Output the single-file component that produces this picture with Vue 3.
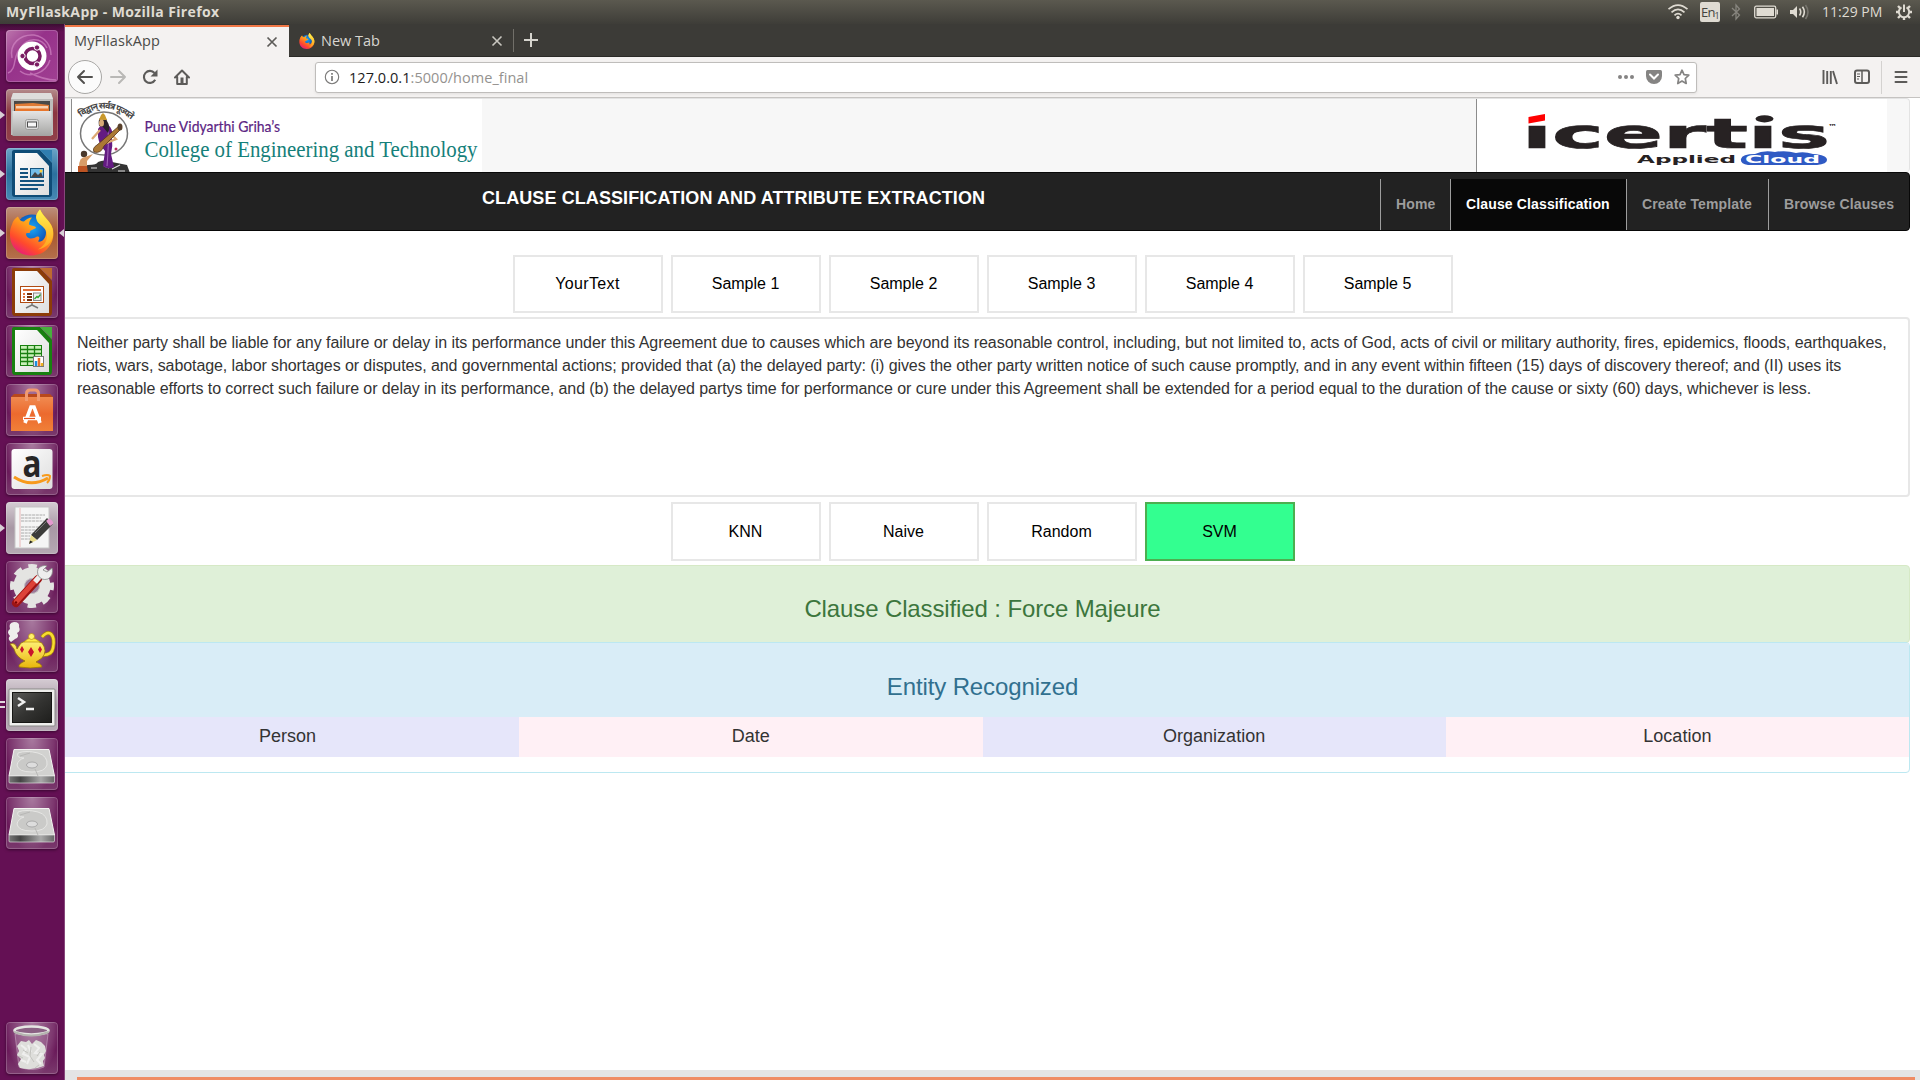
<script setup>
const samples = ['YourText', 'Sample 1', 'Sample 2', 'Sample 3', 'Sample 4', 'Sample 5']
const models = ['KNN', 'Naive', 'Random', 'SVM']
const entities = ['Person', 'Date', 'Organization', 'Location']
const nav = ['Home', 'Clause Classification', 'Create Template', 'Browse Clauses']
const clause = [
  'Neither party shall be liable for any failure or delay in its performance under this Agreement due to causes which are beyond its reasonable control, including, but not limited to, acts of God, acts of civil or military authority, fires, epidemics, floods, earthquakes,',
  'riots, wars, sabotage, labor shortages or disputes, and governmental actions; provided that (a) the delayed party: (i) gives the other party written notice of such cause promptly, and in any event within fifteen (15) days of discovery thereof; and (II) uses its',
  'reasonable efforts to correct such failure or delay in its performance, and (b) the delayed partys time for performance or cure under this Agreement shall be extended for a period equal to the duration of the cause or sixty (60) days, whichever is less.'
]
</script>

<template>
  <div class="desktop">
    <svg class="defs" width="0" height="0">
      <defs>
        <linearGradient id="foxBody" x1="0.8" y1="0" x2="0.2" y2="1">
          <stop offset="0" stop-color="#ffe226" /><stop offset=".45" stop-color="#ff9a1c" /><stop offset=".75" stop-color="#ff4a2c" /><stop offset="1" stop-color="#e31587" />
        </linearGradient>
        <linearGradient id="foxTail" x1="0" y1="0" x2="0" y2="1">
          <stop offset="0" stop-color="#fff44f" /><stop offset="1" stop-color="#ffa01e" />
        </linearGradient>
        <radialGradient id="globe" cx=".5" cy=".4" r=".6">
          <stop offset="0" stop-color="#1aa7f5" /><stop offset="1" stop-color="#0b3fa8" />
        </radialGradient>
        <linearGradient id="metal" x1="0" y1="0" x2="0" y2="1">
          <stop offset="0" stop-color="#e4e4e4" /><stop offset="1" stop-color="#a4a4a2" />
        </linearGradient>
        <linearGradient id="paper" x1="0" y1="0" x2="1" y2="1">
          <stop offset="0" stop-color="#fff" /><stop offset="1" stop-color="#dedede" />
        </linearGradient>
        <linearGradient id="bag" x1="0" y1="0" x2="0" y2="1">
          <stop offset="0" stop-color="#f08a50" /><stop offset=".5" stop-color="#ec6a2e" /><stop offset="1" stop-color="#f08038" />
        </linearGradient>
        <linearGradient id="gold" x1="0" y1="0" x2="0" y2="1">
          <stop offset="0" stop-color="#fff27a" /><stop offset="1" stop-color="#e9b60c" />
        </linearGradient>
        <linearGradient id="screen" x1="0" y1="0" x2="1" y2="1">
          <stop offset="0" stop-color="#5a5a58" /><stop offset=".5" stop-color="#343432" /><stop offset="1" stop-color="#1e1e1c" />
        </linearGradient>
        <linearGradient id="drivefront" x1="0" y1="0" x2="1" y2="0">
          <stop offset="0" stop-color="#777" /><stop offset=".25" stop-color="#444" /><stop offset=".7" stop-color="#aaa" /><stop offset="1" stop-color="#666" />
        </linearGradient>
        <symbol id="firefox" viewBox="0 0 46 46">
          <circle cx="23" cy="22" r="17" fill="url(#globe)" />
          <path d="M3 15C4 11 6 9 9 7C10 10 12 12 15 12C17 10 20 8 23 8C21 10 20 13 20 15C23 17 26 16 27 18C26 20 22 20 21 22C22 24 19 23 17 24C17 30 24 30 28 27C31 27 31 29 29 32C33 33 37 29 37 23C37 16 29 13 27 8C27 5 29 2 31 0C33 5 38 9 42 15C45 20 45 27 43 32C39 41 32 46 22 46C10 46 0 37 1 23C1 20 2 17 3 15Z" fill="url(#foxBody)" />
          <path d="M31 0C27 4 26 9 29 13C33 17 38 19 38 26C38 33 34 37 29 40C40 38 45 29 44 22C43 12 34 8 31 0Z" fill="url(#foxTail)" />
        </symbol>
        <symbol id="drive" viewBox="0 0 52 52">
          <path d="M8 11.500H43L48.500 38H3Z" fill="#d2d2d0" stroke="#f4f4f2" />
          <path d="M3 38H48.500V44Q48.500 45 47 45H4Q3 45 3 44Z" fill="url(#drivefront)" stroke="#ddd" stroke-width=".7" />
          <path d="M12 15Q20 12 32 15Q42 18 41 27Q39 34 26 34Q12 34 11 27Q12 22 18 20Q10 20 12 15Z" fill="#cacac8" stroke="#e6e6e4" />
          <ellipse cx="26" cy="27" rx="5.5" ry="3" fill="#ddd" stroke="#aaa" /><path d="M14 18L24 15M29 31L32 38" stroke="#b8b8b6" />
        </symbol>
      </defs>
    </svg>

    <header class="menubar">
      <span class="wintitle">MyFllaskApp - Mozilla Firefox</span>
      <div class="indicators">
        <svg width="22" height="24" viewBox="0 0 22 24" fill="none" stroke="#dfdbd2" stroke-width="1.7"><path d="M1.5 9.2Q11 1 20.500 9.200M4.500 12.300Q11 6.500 17.500 12.300M7.500 15.300Q11 12 14.500 15.300" /><circle cx="11" cy="17.500" r="1.700" fill="#dfdbd2" stroke="none" /></svg>
        <span class="lang">En<small>1</small></span>
        <svg class="bt" width="12" height="24" viewBox="0 0 12 24" fill="none" stroke="#87857e" stroke-width="1.300"><path d="M2 8L9.500 15L6 19V5L9.500 9L2 16" /></svg>
        <svg class="bat" width="25" height="24" viewBox="0 0 25 24"><rect x=".7" y="6.200" width="21" height="11.600" rx="1.500" fill="none" stroke="#dfdbd2" stroke-width="1.300" /><rect x="2.500" y="8" width="17.500" height="8" fill="#dfdbd2" /><path d="M22.500 9.500H24V14.500H22.500" fill="#dfdbd2" /></svg>
        <svg class="vol" width="22" height="24" viewBox="0 0 22 24"><path d="M1 10H4L8 6V18L4 14H1Z" fill="#dfdbd2" /><path d="M10.500 8.500Q13 12 10.500 15.500M13.500 6.800Q17.200 12 13.500 17.200" fill="none" stroke="#dfdbd2" stroke-width="1.600" /><path d="M16.500 5Q21.500 12 16.500 19" fill="none" stroke="#77756e" stroke-width="1.600" /></svg>
        <span class="clock">11:29 PM</span>
        <svg class="cog" width="18" height="24" viewBox="-9 -12 18 24" fill="none" stroke="#dfdbd2"><path d="M-2.500 -4.600A5.200 5.200 0 1 0 2.500 -4.600" stroke-width="2" /><path d="M0 -7.500V0" stroke-width="2" /><path d="M4 -4L6 -6M-4 -4L-6 -6M5.500 0H8M-5.500 0H-8M4 4L6 6M-4 4L-6 6M0 5.500V8" stroke-width="2.400" /></svg>
      </div>
    </header>

    <div class="workspace">
      <aside class="launcher">
        <div class="tile dash">
          <svg viewBox="0 0 52 52"><path d="M6 28C3 14 14 4 28 5C40 7 45 16 45 25M15 18C20 8 35 6 41 18M14 41C24 49 40 43 44 30M2 43C12 39 6 24 15 18M24 43C34 48 45 50 50 50" fill="none" stroke="#d991cc" stroke-opacity=".6" stroke-width="1.500" /><circle cx="26" cy="26" r="14.500" fill="#fff" /><circle cx="26.500" cy="26" r="7.500" fill="none" stroke="#7a1c62" stroke-width="3.500" /><g fill="#7a1c62" stroke="#fff" stroke-width="1"><circle cx="16.500" cy="26" r="2.700" /><circle cx="31" cy="17.500" r="2.700" /><circle cx="31" cy="34.500" r="2.700" /></g></svg>
        </div>
        <div class="tile files"><i class="run"></i>
          <svg viewBox="0 0 52 52"><path d="M7 4H45L47 10V46H5V10Z" fill="#bdbdbb" /><path d="M7 4H45L47 10H5Z" fill="#dededc" /><rect x="8" y="12" width="36" height="10" fill="#4a4a48" /><path d="M9 15L27 14L43 16V22H9Z" fill="#e07b35" /><path d="M10 17H42V23H10Z" fill="#f7d2b2" /><path d="M10 19.500H42V22H10Z" fill="#e8762c" /><rect x="6.500" y="22" width="39" height="25" fill="url(#metal)" /><rect x="19.500" y="30.500" width="13" height="10" rx="2" fill="#ddd" stroke="#9d9d9b" /><rect x="21.500" y="33" width="9" height="5" fill="#f7f7f7" stroke="#4c4c4c" /></svg>
        </div>
        <div class="tile writer"><i class="run"></i>
          <svg viewBox="0 0 52 52"><path d="M6 4Q6 2 8 2H34L46 15V46Q46 49 43 49H9Q6 49 6 46Z" fill="#0f4c76" /><path d="M9 5H31L43 18V47H9Z" fill="url(#paper)" /><path d="M34 2H46V14Z" fill="#2f7eb0" /><path d="M14 21H22M14 25H22M14 29H22M14 33H38M14 37H38M14 41H32" stroke="#15547f" stroke-width="2" /><rect x="24.500" y="20.500" width="13" height="9" fill="#74bde8" stroke="#15547f" /><path d="M25 29L29 24L32 27L35 24L37 29Z" fill="#444" /><circle cx="35" cy="23" r="1.500" fill="#ffcf3a" /></svg>
        </div>
        <div class="tile fox"><i class="run"></i><i class="focus"></i>
          <svg viewBox="0 0 52 52"><use href="#firefox" x="3" y="2" width="46" height="47" /></svg>
        </div>
        <div class="tile impress">
          <svg viewBox="0 0 52 52"><path d="M6 4Q6 2 8 2H34L46 15V46Q46 50 43 50H9Q6 50 6 46Z" fill="#8c3c08" /><path d="M9 5H31L43 18V47H9Z" fill="url(#paper)" /><path d="M34 2H46V14Z" fill="#bd6a30" /><rect x="14.500" y="20.500" width="23" height="16" fill="#fff" stroke="#b04a12" /><path d="M17 24H35" stroke="#e0703a" stroke-width="2" /><path d="M17 28H19M17 31H19M17 34H19" stroke="#e0703a" stroke-width="2" /><path d="M21 28H26M21 31H26M21 34H26" stroke="#78300c" stroke-width="2" /><rect x="27.500" y="27" width="7.500" height="7.500" fill="#eee" stroke="#888" /><path d="M28.500 33L31 30.500L32 31.500L34.500 28.500" stroke="#2ca52c" fill="none" stroke-width="1.300" /><path d="M26 37V39L20 42M26 39L32 42" fill="none" stroke="#777" stroke-width="1.500" /></svg>
        </div>
        <div class="tile calc">
          <svg viewBox="0 0 52 52"><path d="M6 4Q6 2 8 2H34L46 15V46Q46 50 43 50H9Q6 50 6 46Z" fill="#188010" /><path d="M9 5H31L43 18V47H9Z" fill="url(#paper)" /><path d="M34 2H46V14Z" fill="#46b03c" /><rect x="14.500" y="20.500" width="21" height="20" fill="#c8f0b8" stroke="#188010" /><path d="M14 24.500H35M14 28.500H35M14 32.500H35M14 36.500H35M21.500 20V40M28.500 20V40" stroke="#188010" stroke-width="1.300" /><rect x="27.500" y="31.500" width="10" height="10" fill="#fff" stroke="#777" /><path d="M30 41V36" stroke="#1e8fe0" stroke-width="2.500" /><path d="M33 41V33" stroke="#e8702c" stroke-width="2.500" /><path d="M36 41V38" stroke="#efb020" stroke-width="2.500" /></svg>
        </div>
        <div class="tile software">
          <svg viewBox="0 0 52 52"><path d="M5 13L8 10H44L47 13Z" fill="#b8481c" /><rect x="5" y="13" width="42" height="34" fill="url(#bag)" /><path d="M20.500 17V10Q20.500 6 24 6H29Q32.500 6 32.500 10V17" fill="none" stroke="#f09a70" stroke-width="3" /><path d="M19 39L25 23H28L34 39M17 34.500H35" fill="none" stroke="#fff" stroke-width="3.600" /><path d="M18 34.500H29" stroke="#e95420" stroke-width="1.200" /></svg>
        </div>
        <div class="tile amazon">
          <svg viewBox="0 0 52 52"><rect x="5.500" y="6" width="41" height="40" rx="3" fill="url(#paper)" /><text x="26" y="33.500" text-anchor="middle" class="aglyph" textLength="19" lengthAdjust="spacingAndGlyphs">a</text><path d="M8 34Q25 45 42 35" fill="none" stroke="#f79a1c" stroke-width="3" /><path d="M36 33Q42 31 44 33Q44 37 41 40" fill="none" stroke="#f79a1c" stroke-width="2" /></svg>
        </div>
        <div class="tile editor"><i class="run"></i>
          <svg viewBox="0 0 52 52"><rect x="9" y="5" width="34" height="41" fill="#f5f5f5" stroke="#c6c6c6" /><path d="M14 6V45" stroke="#e6a8a8" stroke-width=".8" /><path d="M15 13H39M15 16H35M15 19H38M15 25H33M15 28H31M15 31H29M15 34H24M15 37H29" stroke="#aaa" stroke-width="1" stroke-dasharray="3 .7" /><path d="M25 33L41 16L47 22L31 38Z" fill="#3c3c3a" /><path d="M25 33L31 38L23 42Z" fill="#e8dc8a" /><path d="M23 42L24 38.500L27 40Z" fill="#222" /><path d="M40 19L43 16.500Q48 19 47 22L44 24Z" fill="#e59ad0" /><path d="M29 31L41 19" stroke="#777" /></svg>
        </div>
        <div class="tile settings">
          <svg viewBox="0 0 52 52"><g transform="translate(26 25)"><circle r="13" fill="none" stroke="#e4e4e2" stroke-width="11" /><circle r="19" fill="none" stroke="#e4e4e2" stroke-width="6" stroke-dasharray="8.200 6.723" stroke-dashoffset="4.100" /><circle r="7.500" fill="#9c7898" stroke="#c4c4c4" /></g><path d="M10 42L32 18" stroke="#9e1414" stroke-width="8" stroke-linecap="round" /><path d="M10.500 40.500L31 18" stroke="#dd4238" stroke-width="5" stroke-linecap="round" /><path d="M29 21L35 14" stroke="#eee" stroke-width="5" /><path d="M36 5Q30 7 32 14Q35 20 42 18Q48 14 46 7L41 11L37 9L41 5Q39 4 36 5Z" fill="#eee" stroke="#888" stroke-width=".8" /><circle cx="10" cy="41.500" r="1.200" fill="#700" /></svg>
        </div>
        <div class="tile lamp">
          <svg viewBox="0 0 52 52"><path d="M36 17Q41 11 45 14Q49 18 47 28Q46 35 37 35" fill="none" stroke="#a88408" stroke-width="4" /><path d="M36 17Q41 11 45 14Q49 18 47 28Q46 35 37 35" fill="none" stroke="#f7dc30" stroke-width="2.500" /><path d="M4 24Q10 22 11 29L15 23Q26 17 36 23Q42 31 36 38L30 42Q36 44 36 47Q24 49 13 47Q12 44 19 41Q10 37 8 29Z" fill="url(#gold)" stroke="#987308" stroke-width=".8" /><path d="M18 22Q25 14 34 22Z" fill="#ffe948" stroke="#b88d10" stroke-width=".7" /><circle cx="25.500" cy="16.500" r="3" fill="#fff16a" stroke="#b88d10" stroke-width=".7" /><path d="M16 26L18 29.500L16 33L14 29.500ZM25 27L28 32L25 37L22 32ZM34 26L36 29.500L34 33L32 29.500Z" fill="#c9142c" /><path d="M5 22Q1 19 4 16Q0 12 4 9Q2 3 8 2Q14 2 13 7Q15 11 11 13Q14 17 9 19Z" fill="#eeeeec" /></svg>
        </div>
        <div class="tile terminal"><i class="pips"></i>
          <svg viewBox="0 0 52 52"><rect x="3" y="10" width="46" height="37" rx="1" fill="#eeeeec" stroke="#8a8a88" /><rect x="6.500" y="13.500" width="39" height="30" fill="url(#screen)" stroke="#161614" /><path d="M12 19L18 23L12 27M20 30H28" fill="none" stroke="#f0f0f0" stroke-width="2.500" /></svg>
        </div>
        <div class="tile"><svg viewBox="0 0 52 52"><use href="#drive" width="52" height="52" /></svg></div>
        <div class="tile"><svg viewBox="0 0 52 52"><use href="#drive" width="52" height="52" /></svg></div>
        <div class="tile trash">
          <svg viewBox="0 0 52 52"><path d="M9 12L13 45Q26 50 38 45L42 12Z" fill="#fff" fill-opacity=".12" stroke="#c9a8c2" stroke-width=".6" /><path d="M11 24L15 19L20 20L23 18L26 22L30 18L35 20L39 24L40 29L38 33L39 36L37 39L38 44Q26 49 14 46L12 42L15 37L11 33L13 29Z" fill="#dededb" /><path d="M15 23L20 27L17 32L24 35L21 42M28 22L33 26L29 31L36 32L31 38L35 42M22 23L25 30M15 38L20 40" stroke="#efefee" stroke-width="2" fill="none" /><path d="M25 25L24 34L28 40M13 34L17 36M34 30L31 34M17 28L22 31M33 43L29 46" stroke="#c2c2be" fill="none" /><ellipse cx="25.500" cy="8.500" rx="17" ry="4" fill="#8b6184" stroke="#e5e5e2" stroke-width="2.600" /><path d="M8 10Q25 17 43 10" fill="none" stroke="#b5b5b0" stroke-width="2" /></svg>
        </div>
      </aside>

      <section class="browser">
        <div class="tabs">
          <div class="tab active"><span class="t1">MyFllaskApp</span><svg width="12" height="12" viewBox="0 0 12 12"><path d="M1.500 1.500L10.500 10.500M10.500 1.500L1.500 10.500" stroke="#5c5b58" stroke-width="1.700" /></svg></div>
          <div class="tab"><svg width="16" height="16"><use href="#firefox" width="16" height="16" /></svg><span class="t2">New Tab</span><svg width="12" height="12" viewBox="0 0 12 12"><path d="M1.500 1.500L10.500 10.500M10.500 1.500L1.500 10.500" stroke="#c9c7c0" stroke-width="1.600" /></svg></div>
          <svg class="plus" width="16" height="16" viewBox="0 0 16 16"><path d="M8 1V15M1 8H15" stroke="#d6d4ce" stroke-width="2" /></svg>
        </div>
        <div class="toolbar">
          <span class="back"><svg width="18" height="16" viewBox="0 0 18 16" fill="none" stroke="#52514f" stroke-width="2" stroke-linecap="round" stroke-linejoin="round"><path d="M8 2L2 8L8 14M2 8H16" /></svg></span>
          <svg class="fwd" width="18" height="16" viewBox="0 0 18 16" fill="none" stroke="#b9b8b6" stroke-width="2" stroke-linecap="round" stroke-linejoin="round"><path d="M10 2L16 8L10 14M16 8H2" /></svg>
          <svg class="reload" width="16" height="16" viewBox="0 0 16 16"><path d="M13.200 10.800A6 6 0 1 1 12.500 4" fill="none" stroke="#5c5b59" stroke-width="2.100" /><path d="M15.500 .5V7.500H8.500Z" fill="#5c5b59" /></svg>
          <svg class="home" width="16" height="16" viewBox="0 0 16 16"><path d="M1 8.500L8 1.500L15 8.500M3.200 8V15H12.800V8" fill="none" stroke="#5c5b59" stroke-width="2" stroke-linejoin="round" stroke-linecap="round" /><path d="M6.500 8.500H9.500V15H6.500Z" fill="#5c5b59" /></svg>
          <div class="url">
            <svg width="16" height="16" viewBox="0 0 16 16"><circle cx="8" cy="8" r="6.700" fill="none" stroke="#7a7978" stroke-width="1.100" /><path d="M8 7V12M8 4V5.700" stroke="#7a7978" stroke-width="1.700" /></svg>
            <span class="addr"><b>127.0.0.1</b>:5000/home_final</span>
            <svg width="16" height="16" viewBox="0 0 16 16" fill="#858483"><circle cx="2" cy="8" r="2" /><circle cx="8" cy="8" r="2" /><circle cx="14" cy="8" r="2" /></svg>
            <svg width="16" height="16" viewBox="0 0 16 16"><path d="M1.500 1H14.500Q16 1 16 2.500V7A8 8 0 0 1 0 7V2.500Q0 1 1.500 1Z" fill="#858483" /><path d="M4 5.500L8 9.500L12 5.500" fill="none" stroke="#fff" stroke-width="2" stroke-linecap="round" /></svg>
            <svg width="16" height="16" viewBox="0 0 16 16"><path d="M8 1.200L10 5.600L14.800 6.200L11.300 9.500L12.200 14.500L8 12.100L3.800 14.500L4.700 9.500L1.200 6.200L6 5.600Z" fill="none" stroke="#858483" stroke-width="1.700" stroke-linejoin="round" /></svg>
          </div>
          <svg class="lib" width="16" height="16" viewBox="0 0 16 16" fill="none" stroke="#5c5b59" stroke-width="1.900"><path d="M1.500 1V15M5.200 2V15M8.800 2V15M11 2L15 15" /></svg>
          <svg class="side" width="16" height="16" viewBox="0 0 16 16" fill="none" stroke="#5c5b59"><rect x="1" y="1.500" width="14" height="12.500" rx="2" stroke-width="2" /><path d="M8 2V14" stroke-width="1.500" /><path d="M3 5H6M3 7.500H6M3 10H5" stroke-width="1" /></svg>
          <i class="bar"></i>
          <svg class="burger" width="14" height="14" viewBox="0 0 14 14" stroke="#5c5b59" stroke-width="2" stroke-linecap="round"><path d="M1.500 2H12.500M1.500 7H12.500M1.500 12H12.500" /></svg>
        </div>

        <main class="page">
          <div class="banner">
            <svg class="college" width="411" height="74" viewBox="71 98 411 74">
              <rect x="71" y="98" width="411" height="74" fill="#fff" /><path d="M71.500 98V172" stroke="#8c8c8c" />
              <path id="arc" d="M80 117Q104 98 129 117" fill="none" />
              <text class="motto"><textPath href="#arc" textLength="58">विद्वान् सर्वत्र पूज्यते।</textPath></text>
              <ellipse cx="104" cy="132.500" rx="23.500" ry="21.500" fill="none" stroke="#777" stroke-width="1.500" />
              <path d="M81 172Q82 164 88 164Q97 164 98 161Q104 158 112 161L127 164L130 172Z" fill="#333" />
              <path d="M91 167H97M104 165L109 167M112 168L120 164M118 170H125" stroke="#ddd" stroke-width="1.200" />
              <path d="M98 128Q101 123 107 123Q114 128 112 137Q113 145 111 153L114 166Q108 169 103 165L105 150Q99 143 98 136Z" fill="#641b82" />
              <path d="M108 126Q109 142 107 165" stroke="#a46abb" fill="none" />
              <path d="M99 125Q98 119 100 117Q106 115 107 120Q111 126 108 132L103 126Z" fill="#29202a" />
              <path d="M99 119L101 114L103 112L105 114L107 119Z" fill="#c9992c" />
              <ellipse cx="101.500" cy="122" rx="2.500" ry="3.500" fill="#d7a978" />
              <path d="M100 129L92 138M111 133L116 138L104 143" stroke="#dda974" stroke-width="2.300" fill="none" />
              <path d="M94 151Q92 147 97 144L119 125L121 128L104 145Q101 153 94 151Z" fill="#ab7834" stroke="#57351a" stroke-width=".8" />
              <ellipse cx="120" cy="126" rx="2.500" ry="3.500" fill="#58402b" />
              <circle cx="84" cy="153" r="3.200" fill="#49382b" /><path d="M79 166Q79 156 85 156L93 153L87 160L87 166Z" fill="#d79c68" /><path d="M78 165H87L88 172H78Z" fill="#bd5423" />
              <circle cx="116" cy="148" r="1.500" fill="#b92b60" />
              <text x="144.500" y="130.500" class="pune" textLength="135.500" lengthAdjust="spacingAndGlyphs">Pune Vidyarthi Griha’s</text>
              <text x="144.500" y="156" class="coet" textLength="333" lengthAdjust="spacingAndGlyphs">College of Engineering and Technology</text>
            </svg>
            <svg class="icertis" width="411" height="74" viewBox="1476 98 411 74">
              <rect x="1476" y="98" width="411" height="74" fill="#fff" /><path d="M1476.500 98V172" stroke="#8c8c8c" />
              <text x="1522" y="147" class="ice" textLength="308" lengthAdjust="spacingAndGlyphs">icertis</text>
              <rect x="1524" y="110" width="26" height="14" fill="#fff" /><path d="M1528.500 116L1545 113V119.500L1528.500 122.500Z" fill="#f00" />
              <rect x="1752" y="110" width="25" height="14" fill="#fff" /><ellipse cx="1764.500" cy="117.800" rx="9" ry="3.600" fill="#272223" />
              <text x="1828" y="128" class="tm" textLength="9" lengthAdjust="spacingAndGlyphs">™</text>
              <text x="1637" y="161.500" class="applied" textLength="99" lengthAdjust="spacingAndGlyphs">Applied</text>
              <path d="M1748 164Q1740 163 1741 158Q1742 153 1755 153Q1763 149 1775 151Q1786 149 1796 152Q1804 150 1813 153Q1827 154 1827 159Q1827 163 1817 164Z" fill="#2f5ac4" />
              <text x="1745" y="161.500" class="cloud" textLength="75" lengthAdjust="spacingAndGlyphs">Cloud</text>
            </svg>
          </div>

          <nav class="navbar">
            <span class="brand">CLAUSE CLASSIFICATION AND ATTRIBUTE EXTRACTION</span>
            <a v-for="(n, i) in nav" :key="n" :class="['n' + i, { on: i === 1 }]">{{ n }}</a>
          </nav>

          <div class="buttons first"><button v-for="s in samples" :key="s">{{ s }}</button></div>
          <div class="clause"><p v-for="(l, i) in clause" :key="i" :class="'l' + i">{{ l }}</p></div>
          <div class="buttons second"><button v-for="m in models" :key="m" :class="{ picked: m === 'SVM' }">{{ m }}</button></div>
          <div class="result"><span>Clause Classified : Force Majeure</span></div>
          <div class="recog">
            <h3><span>Entity Recognized</span></h3>
            <div class="row"><span v-for="e in entities" :key="e">{{ e }}</span></div>
          </div>
        </main>
        <footer class="bottom"><i></i></footer>
      </section>
    </div>
  </div>
</template>

<style>
body { margin: 0; overflow: hidden; }
</style>

<style scoped>
* { box-sizing: border-box; }
.desktop { width: 1920px; height: 1080px; display: flex; flex-direction: column; overflow: hidden; background: #fff; font-family: "Liberation Sans", Arial, sans-serif; }
.defs { position: absolute; }
svg { flex: none; display: block; }
.menubar { height: 24px; flex: none; display: flex; justify-content: space-between; padding-left: 6px; background: linear-gradient(#5b594f, #3e3d38); color: #dfdbd2; font-family: "Open Sans", "Noto Sans", sans-serif; font-size: 14px; line-height: 24px; white-space: nowrap; }
.wintitle { font-weight: 700; letter-spacing: .36px; }
.indicators { display: flex; align-items: center; padding-right: 7px; }
.lang { width: 20px; height: 20px; margin-left: 11px; background: #dfdbd2; color: #45443e; border-radius: 2px; font-size: 13px; line-height: 20px; letter-spacing: -.8px; padding-left: 1px; display: flex; }
.lang small { font-size: 9px; line-height: 27px; letter-spacing: 0; }
.bt { margin-left: 10px; }
.bat { margin-left: 12px; }
.vol { margin-left: 10px; }
.clock { margin-left: 11px; width: 62px; }
.cog { margin-left: 11px; }

.workspace { flex: 1; display: flex; min-height: 0; }
.launcher { width: 65px; flex: none; z-index: 2; display: flex; flex-direction: column; gap: 7px; padding: 6px 0 6px 6px; background: linear-gradient(#3c0c33, #641054 8px); border-right: 1px solid #87477b; }
.tile { position: relative; flex: none; width: 52px; height: 52px; border-radius: 4px; background: radial-gradient(ellipse at 50% 0, rgba(255,255,255,.42), rgba(255,255,255,.12) 60%, rgba(255,255,255,0) 75%), linear-gradient(#6a1a5a 55%, #7a3a6d); box-shadow: inset 0 0 0 1px rgba(255,255,255,.2), 0 1px 3px rgba(30,0,25,.6); }
.tile svg { width: 52px; height: 52px; }
.dash { background: linear-gradient(135deg, #bd76ad, #96328a 40%, #a03f92); }
.files { background: linear-gradient(#b48c8c, #8b3540 45%, #91404a); }
.writer { background: linear-gradient(#6da5c8, #2c719e 50%, #4789b4); }
.fox { background: linear-gradient(#bd8f7d, #a8572e 50%, #b5704c); }
.editor, .terminal { background: linear-gradient(#d5ccd3, #a898a5 50%, #b5a9b3); }
.trash { margin-top: auto; }
.run { position: absolute; left: -6px; top: 22px; border-left: 5px solid #d8d0d6; border-top: 4px solid transparent; border-bottom: 4px solid transparent; }
.focus { position: absolute; right: -6px; top: 22px; border-right: 5px solid #d8d0d6; border-top: 4px solid transparent; border-bottom: 4px solid transparent; }
.pips { position: absolute; left: -6px; top: 22px; width: 5px; height: 7px; border-top: 2px solid #e0d8de; border-bottom: 2px solid #e0d8de; }
.aglyph { font: 700 37px "Open Sans", sans-serif; fill: #262626; }

.browser { flex: 1; min-width: 0; display: flex; flex-direction: column; }
.tabs { height: 33px; flex: none; display: flex; align-items: stretch; background: #3c3b37; border-bottom: 1px solid #2b2a27; font-family: "Open Sans", "Noto Sans", sans-serif; font-size: 14.500px; }
.tab { width: 225px; display: flex; align-items: center; padding: 1px 11px 0 10px; color: #d8d6d0; position: relative; }
.tab span { flex: 1; }
.tab .t1 { margin: -2px 0 0 -1px; letter-spacing: .12px; }
.tab .t2 { padding-left: 6px; }
.tab.active { width: 224px; height: 33px; border-top: 1px solid #35342f; background: #f4f2f1; color: #4b4a48; box-shadow: inset 0 2px #f07746; }
.tab:not(.active)::after { content: ""; position: absolute; right: 0; top: 5px; bottom: 4px; width: 1px; background: #716f69; }
.plus { margin: 8px 0 0 9px; }
.toolbar { height: 41px; flex: none; display: flex; align-items: center; background: #f4f2f1; border-bottom: 1px solid #c5c3c1; }
.back { width: 34px; height: 34px; border: 1px solid #a8a7a5; border-radius: 50%; background: #fbfbfb; margin-left: 3px; display: flex; align-items: center; justify-content: center; }
.fwd { margin-left: 7px; }
.reload { margin-left: 15px; }
.home { margin-left: 16px; }
.url { margin-left: 125px; width: 1382px; height: 31px; border: 1px solid #bfbdbb; border-radius: 3px; background: #fff; display: flex; align-items: center; gap: 12px; padding: 0 6px 0 8px; box-shadow: 0 1px 3px rgba(0,0,0,.08); }
.addr { flex: 1; margin-left: -3px; font: 14.500px "Open Sans", "Noto Sans", sans-serif; letter-spacing: .04px; color: #94928f; }
.addr b { font-weight: 400; color: #1c1c1c; }
.lib { margin-left: 125px; }
.side { margin-left: 16px; }
.bar { width: 1px; height: 33px; margin-left: 11px; background: #d4d2d0; }
.burger { margin-left: 12px; }

.page { flex: 1; min-height: 0; margin-left: -10px; width: 1855px; display: flex; flex-direction: column; }
.banner { height: 74px; flex: none; display: flex; justify-content: space-between; background: #f7f7f7; border: 1px solid #e3e3e3; border-bottom: 0; border-radius: 4px; padding: 0 22px 0 15px; overflow: hidden; }
.motto { font: 700 9px "Noto Sans", "Noto Sans Devanagari", sans-serif; fill: #444; }
.pune { font: 15px Lato, sans-serif; fill: #5c2583; stroke: #5c2583; stroke-width: .2px; }
.coet { font: 24px "Liberation Serif", serif; fill: #15807a; }
.ice { font: 700 41px "DejaVu Sans", sans-serif; fill: #272223; stroke: #272223; stroke-width: .7px; }
.tm { font: 700 7px "DejaVu Sans", sans-serif; fill: #272223; }
.applied { font: 700 11px "DejaVu Sans", sans-serif; fill: #272223; }
.cloud { font: 700 11px "DejaVu Sans", sans-serif; fill: #fff; }
.navbar { height: 59px; flex: none; display: flex; align-items: stretch; background: #222; border: 1px solid #080808; border-radius: 4px; padding-top: 6px; }
.brand { margin-left: 426px; width: 898px; color: #fff; font-weight: 700; font-size: 18px; line-height: 38px; letter-spacing: .09px; white-space: nowrap; }
.navbar a { border-left: 1px solid #9d9d9d; color: #9d9d9d; font-size: 14px; font-weight: 700; line-height: 50px; letter-spacing: .14px; padding-left: 15px; white-space: nowrap; }
.navbar .on { background: #080808; color: #fff; }
.n0 { width: 70px; } .n1 { width: 176px; } .n2 { width: 142px; } .n3 { flex: 1; }
.buttons { flex: none; display: flex; justify-content: center; gap: 8px; }
.buttons button { width: 150px; height: 58px; padding: 0; border: 2px solid #e7e7e7; background: #fff; color: #000; font: 16px "Liberation Sans", Arial, sans-serif; border-radius: 0; }
.first { margin-top: 24px; }
.first button:first-child { letter-spacing: .35px; }
.clause { height: 180px; flex: none; margin-top: 4px; border: 2px solid #e7e7e7; border-radius: 4px; padding: 12px 0 0 20px; font-size: 16px; line-height: 23px; color: #333; white-space: nowrap; }
.clause p { margin: 0; }
.clause .l0 { letter-spacing: -.046px; }
.clause .l1 { letter-spacing: -.085px; }
.clause .l2 { letter-spacing: -.077px; }
.second { margin-top: 5px; }
.second button { height: 59px; }
.second .picked { background: #33ff90; border-color: #4caf50; }
.result { height: 78px; flex: none; margin-top: 4px; background: #dff0d8; border: 1px solid #d6e9c6; border-radius: 4px; color: #3c763d; font-size: 24px; line-height: 86px; letter-spacing: -.12px; text-align: center; }
.recog { height: 131px; flex: none; margin-top: -1px; border: 1px solid #bce8f1; border-radius: 4px; overflow: hidden; }
.recog h3 { margin: 0; height: 74px; background: #d9edf7; color: #31708f; font-size: 24px; font-weight: 400; line-height: 87px; letter-spacing: -.12px; text-align: center; }
.row { display: flex; }
.row span { flex: 1; height: 40px; line-height: 39px; font-size: 18px; color: #333; text-align: center; background: #e6e6fa; }
.row span:nth-child(even) { background: #fff0f5; }
.bottom { height: 10px; flex: none; background: #e4e4e4; padding: 7px 5px 0 12px; }
.bottom i { display: block; height: 3px; background: #ef8c64; }
</style>
